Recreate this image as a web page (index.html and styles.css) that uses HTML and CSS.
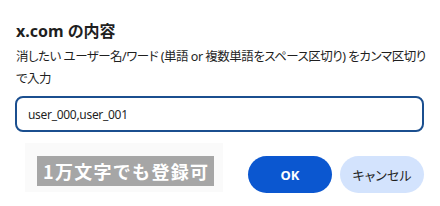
FILE: index.html
```html
<!DOCTYPE html>
<html lang="ja">
<head>
<meta charset="utf-8">
<link rel="stylesheet" href="styles.css">
</head>
<body>
<div class="dialog">
  <h1 class="title">x.com の内容</h1>
  <p class="message">消したい ユーザー名/ワード (単語 or 複数単語をスペース区切り) をカンマ区切りで入力</p>
  <div class="field">user_000,user_001</div>
  <div class="footer">
    <div class="note-wrap"><span class="note">1万文字でも登録可</span></div>
    <div class="actions">
      <button class="btn btn-ok">OK</button>
      <button class="btn btn-cancel">キャンセル</button>
    </div>
  </div>
</div>
</body>
</html>
```
FILE: styles.css
```css
html, body {
  margin: 0;
  padding: 0;
  background: #ffffff;
}
body {
  width: 440px;
  height: 206px;
  overflow: hidden;
  font-family: "Noto Sans", "Noto Sans CJK JP", sans-serif;
  color: #1f1f1f;
}
.dialog {
  padding: 21px 16px 0 15px;
  display: flex;
  flex-direction: column;
}
.title {
  margin: 0 0 0 1px;
  font-size: 16px;
  line-height: 20px;
  font-weight: 700;
  font-feature-settings: "palt";
}
.message {
  margin: 5px 0 0 1px;
  font-size: 12.5px;
  line-height: 22px;
  width: 420px;
  letter-spacing: -0.5px;
  font-feature-settings: "palt";
}
.field {
  margin-top: 6px;
  height: 32px;
  border: 2px solid #1b4f8f;
  border-radius: 8px;
  padding: 0 11px;
  display: flex;
  align-items: center;
  font-size: 12px;
  letter-spacing: -0.3px;
}
.footer {
  margin-top: 11px;
  display: flex;
  align-items: flex-start;
  justify-content: space-between;
}
.note-wrap {
  margin-left: 10px;
  padding: 13px 9px 6px 12px;
  background: #fafafa;
  display: flex;
}
.note {
  background: #a6a6a6;
  color: #ffffff;
  font-family: "Noto Sans CJK JP", sans-serif;
  font-weight: 700;
  font-size: 18px;
  line-height: 30px;
  height: 30px;
  padding: 0 5px 0 6px;
  letter-spacing: 1.3px;
}
.actions {
  margin-top: 13px;
  display: flex;
  gap: 8px;
}
.btn {
  width: 84px;
  height: 37px;
  border: none;
  border-radius: 19px;
  font-family: "Noto Sans", "Noto Sans CJK JP", sans-serif;
  font-size: 13px;
  padding: 0;
}
.btn-ok {
  background: #0b57d0;
  color: #ffffff;
  font-weight: 700;
}
.btn-cancel {
  background: #d3e3fd;
  color: #1f1f1f;
  font-feature-settings: "palt";
}
```
